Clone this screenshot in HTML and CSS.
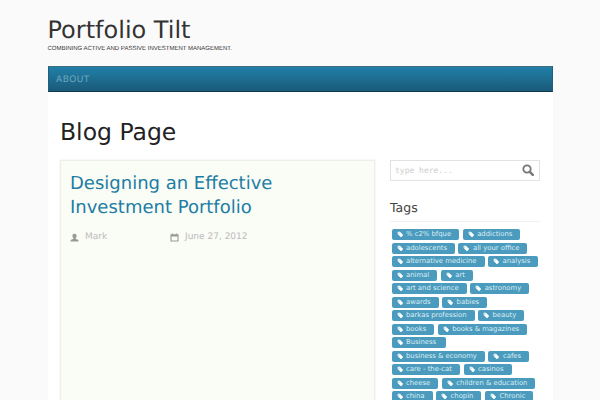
FILE: index.html
```html
<!DOCTYPE html>
<html>
<head>
    <meta charset="utf-8">
    <meta name="viewport" content="width=device-width, initial-scale=1">
    <title>Portfolio Tilt</title>
    <link rel="stylesheet" href="styles.css">
</head>
<body>

    <!-- shared tag icon -->
    <svg class="sprite" width="0" height="0">
        <symbol id="tag-icon" viewBox="0 0 10 10">
            <path d="M1 1h3.6l4.6 4.6a.8.8 0 0 1 0 1.1L6.700 9.200a.8.8 0 0 1-1.100 0L1 4.600z M3 2.200a.8.8 0 1 0 0 1.600a.8.8 0 0 0 0-1.600z" fill-rule="evenodd"/>
        </symbol>
    </svg>

    <div class="wrapper">
        <header class="site-header">
            <div class="site-title">Portfolio Tilt</div>
            <div class="site-tagline">COMBINING ACTIVE AND PASSIVE INVESTMENT MANAGEMENT.</div>
        </header>

        <nav class="main-nav">
            <a>ABOUT</a>
        </nav>

        <div class="content">
            <h1 class="page-title">Blog Page</h1>

            <div class="columns">
                <main class="post">
                    <h2 class="post-title">Designing an Effective Investment Portfolio</h2>
                    <div class="post-meta">
                        <span class="meta-item meta-author">
                            <svg width="9" height="9" viewBox="0 0 10 10"><path d="M5 .8c1.500 0 2.300 1 2.300 2.500 0 1-.4 1.800-1 2.300v.9l3 1.200V9.500H.7V7.700l3-1.200v-.9c-.6-.5-1-1.300-1-2.300C2.700 1.800 3.500.8 5 .8z"/></svg>
                            Mark
                        </span>
                        <span class="meta-item">
                            <svg width="9" height="9" viewBox="0 0 10 10"><path d="M.5 1.500h9v8h-9z M1.700 4v4.300h6.600V4z" fill-rule="evenodd"/><path d="M2.300.5h1.200v1.500H2.300z M6.500.5h1.200v1.500H6.500z"/></svg>
                            June 27, 2012
                        </span>
                    </div>
                </main>

                <aside class="sidebar">
                    <div class="search-box">
                        <span class="search-hint">type here...</span>
                        <svg width="12" height="12" viewBox="0 0 12 12"><circle cx="5" cy="5" r="3.700" fill="none" stroke="#777" stroke-width="1.800"/><path d="M7.800 7.800l3 3" stroke="#777" stroke-width="2.400" stroke-linecap="round"/></svg>
                    </div>

                    <h3 class="widget-title">Tags</h3>

                    <div class="tags">
                        <a class="tag"><svg><use href="#tag-icon"/></svg>% c2% bfque</a>
                        <a class="tag"><svg><use href="#tag-icon"/></svg>addictions</a>
                        <a class="tag"><svg><use href="#tag-icon"/></svg>adolescents</a>
                        <a class="tag"><svg><use href="#tag-icon"/></svg>all your office</a>
                        <a class="tag"><svg><use href="#tag-icon"/></svg>alternative medicine</a>
                        <a class="tag"><svg><use href="#tag-icon"/></svg>analysis</a>
                        <a class="tag"><svg><use href="#tag-icon"/></svg>animal</a>
                        <a class="tag"><svg><use href="#tag-icon"/></svg>art</a>
                        <a class="tag"><svg><use href="#tag-icon"/></svg>art and science</a>
                        <a class="tag"><svg><use href="#tag-icon"/></svg>astronomy</a>
                        <a class="tag"><svg><use href="#tag-icon"/></svg>awards</a>
                        <a class="tag"><svg><use href="#tag-icon"/></svg>babies</a>
                        <a class="tag"><svg><use href="#tag-icon"/></svg>barkas profession</a>
                        <a class="tag"><svg><use href="#tag-icon"/></svg>beauty</a>
                        <a class="tag"><svg><use href="#tag-icon"/></svg>books</a>
                        <a class="tag"><svg><use href="#tag-icon"/></svg>books &amp; magazines</a>
                        <a class="tag tag-long"><svg><use href="#tag-icon"/></svg>Business</a>
                        <a class="tag"><svg><use href="#tag-icon"/></svg>business &amp; economy</a>
                        <a class="tag"><svg><use href="#tag-icon"/></svg>cafes</a>
                        <a class="tag"><svg><use href="#tag-icon"/></svg>care - the-cat</a>
                        <a class="tag"><svg><use href="#tag-icon"/></svg>casinos</a>
                        <a class="tag"><svg><use href="#tag-icon"/></svg>cheese</a>
                        <a class="tag"><svg><use href="#tag-icon"/></svg>children &amp; education</a>
                        <a class="tag"><svg><use href="#tag-icon"/></svg>china</a>
                        <a class="tag"><svg><use href="#tag-icon"/></svg>chopin</a>
                        <a class="tag"><svg><use href="#tag-icon"/></svg>Chronic</a>
                    </div>
                </aside>
            </div>
        </div>
    </div>

</body>
</html>
```

FILE: styles.css
```css
html, body {
    height: 100%;
}
body {
    background-color: #fafafa;
    font-family: "DejaVu Sans", sans-serif;
    text-rendering: geometricPrecision;
    margin: 0;
    padding: 0;
    overflow: hidden;
}
.sprite {
    display: block;
    height: 0;
}
.wrapper {
    width: 505px;
    margin-left: 47.5px;
}
.site-header {
    padding-top: 15px;
    height: 51px;
    box-sizing: border-box;
}
.site-title {
    font-size: 24px;
    line-height: 30px;
    color: #333;
}
.site-tagline {
    font-family: "Liberation Sans", sans-serif;
    font-size: 6px;
    line-height: 8px;
    margin-top: 0;
    color: #333;
}
.main-nav {
    height: 26px;
    box-sizing: border-box;
    margin-top: 15px;
    padding-left: 7.5px;
    background: linear-gradient(#217fa9, #1a5a78);
    border-top: 1px solid #40707f;
    border-left: 1px solid #1f5f7c;
    border-right: 1px solid #1f5f7c;
    border-bottom: 1px solid #0f3a4e;
}
.main-nav a {
    display: block;
    font-size: 9px;
    line-height: 27px;
    letter-spacing: 0.5px;
    color: #6fa8bf;
}
.content {
    background-color: #fff;
    padding: 25px 12.5px 0;
    height: 400px;
}
.page-title {
    font-size: 23.5px;
    font-weight: normal;
    line-height: 30px;
    margin: 0 0 13px;
    color: #222;
}
.columns {
    display: flex;
    gap: 15px;
}
.post {
    width: 315px;
    flex-shrink: 0;
    box-sizing: border-box;
    height: 400px;
    padding: 10px 9px;
    background-color: #fafcf6;
    border: 1px solid #eeeeea;
    box-shadow: 0 0 1px #ddd;
}
.post-title {
    font-size: 18px;
    font-weight: normal;
    line-height: 24px;
    margin: 1px 0 0;
    color: #217ca3;
}
.post-meta {
    display: flex;
    margin-top: 12px;
    font-size: 9px;
    color: #bbb;
}
.meta-item {
    display: flex;
    align-items: center;
    gap: 6px;
}
.meta-item svg {
    fill: #999;
}
.meta-author {
    width: 100px;
}
.sidebar {
    width: 151px;
}
.search-box {
    height: 21px;
    box-sizing: border-box;
    border: 1px solid #e2e2e2;
    display: flex;
    align-items: center;
    justify-content: space-between;
    padding: 0 5px 1px 4px;
}
.search-hint {
    font-family: "DejaVu Sans Mono", monospace;
    font-size: 8px;
    color: #ccc;
}
.widget-title {
    font-size: 12.500px;
    font-weight: normal;
    line-height: 16px;
    color: #444;
    margin: 19px 0 0;
    padding-bottom: 5px;
    border-bottom: 1px solid #f2f2f2;
}
.tags {
    display: flex;
    flex-wrap: wrap;
    gap: 2.500px 3.500px;
    margin: 7px 0 0 1.500px;
}
.tag {
    display: flex;
    align-items: center;
    height: 11px;
    padding: 0 8px 0 5px;
    background-color: #4a9bbd;
    border-radius: 2px;
    color: #dcedf4;
    font-size: 6.850px;
    line-height: 11px;
}
.tag-long {
    width: 54px;
    box-sizing: border-box;
}
.tag svg {
    width: 6.500px;
    height: 6.500px;
    fill: #fff;
    margin-right: 3px;
}
```
